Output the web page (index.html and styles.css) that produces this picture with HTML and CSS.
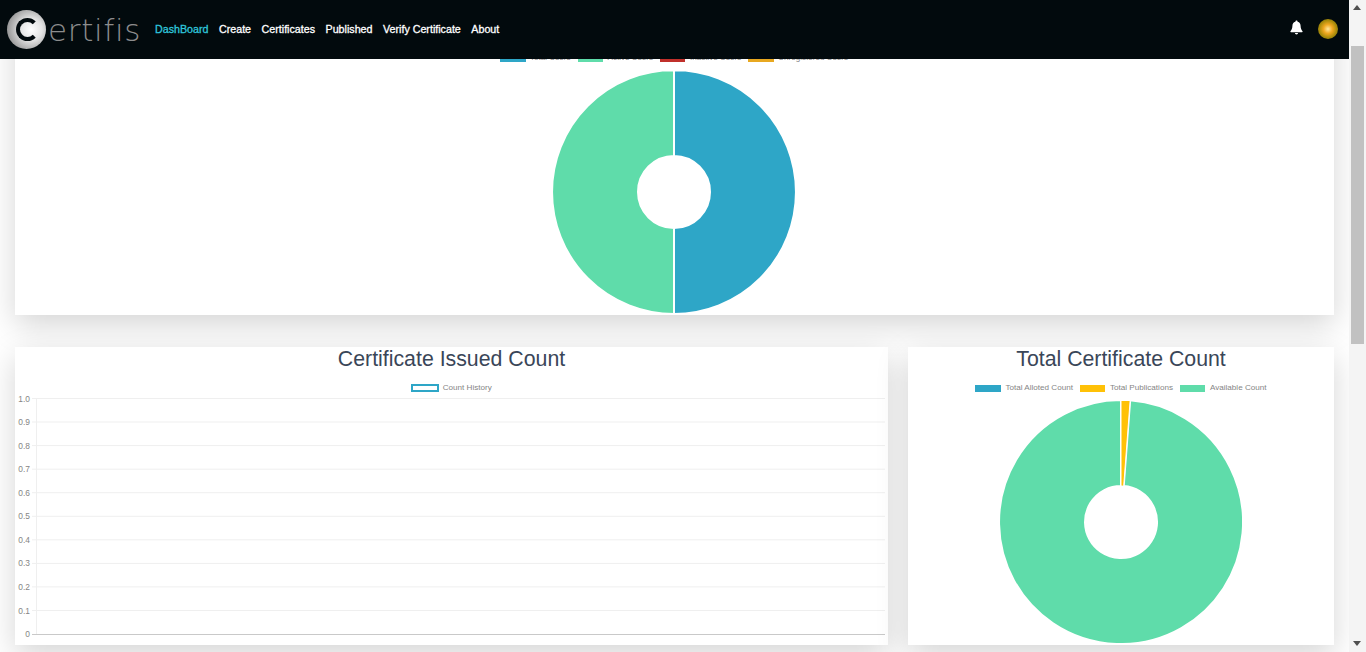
FILE: index.html
```html
<!DOCTYPE html>
<html lang="en">
<head>
<meta charset="UTF-8">
<meta name="viewport" content="width=device-width, initial-scale=1.0">
<link rel="stylesheet" href="styles.css">
<title>Certifis</title>
</head>
<body>
<div class="app">
  <header class="topbar">
    <div class="logo">
      <span class="logo-mark"></span>
      <span class="logo-text">ertifis</span>
    </div>
    <nav class="nav">
      <a class="nav-link active">DashBoard</a>
      <a class="nav-link">Create</a>
      <a class="nav-link">Certificates</a>
      <a class="nav-link">Published</a>
      <a class="nav-link">Verify Certificate</a>
      <a class="nav-link">About</a>
    </nav>
    <div class="topbar-right">
      <svg class="bell" viewBox="0 0 14 16" width="13" height="15">
        <path d="M7 0.5c-.7 0-1.2.5-1.2 1.2C3.6 2.3 2.6 4 2.6 6.2c0 3-1 4.6-2.1 5.8-.3.4-.1 1 .5 1h12c.6 0 .8-.6.5-1-1.100-1.200-2.100-2.800-2.100-5.800 0-2.200-1-3.900-3.200-4.500C8.200 1 7.700.5 7 .5z" fill="#fff"/>
        <path d="M5.300 14c0 .9.800 1.600 1.700 1.600s1.700-.7 1.700-1.600z" fill="#fff"/>
      </svg>
      <span class="avatar"></span>
    </div>
  </header>

  <main class="page">
    <section class="card card-wide">
      <div class="card-title"></div>
      <div class="legend">
        <span class="legend-item"><i class="swatch blue"></i>Total Users</span>
        <span class="legend-item"><i class="swatch green"></i>Active Users</span>
        <span class="legend-item"><i class="swatch red"></i>Inactive Users</span>
        <span class="legend-item"><i class="swatch orange"></i>Unregistered Users</span>
      </div>
      <svg class="pie" viewBox="-121 -121 242 242" width="242" height="242">
        <path d="M0 -122A122 122 0 0 1 0 122L0 36A36 36 0 0 0 0 -36Z" fill="#2ea6c7" stroke="#fff" stroke-width="2"/>
        <path d="M0 122A122 122 0 0 1 0 -122L0 -36A36 36 0 0 0 0 36Z" fill="#5fdcaa" stroke="#fff" stroke-width="2"/>
      </svg>
    </section>

    <div class="row">
      <section class="card">
        <h2 class="card-title">Certificate Issued Count</h2>
        <div class="legend legend-line">
          <span class="legend-item"><i class="swatch hollow"></i>Count History</span>
        </div>
        <svg class="line-chart" viewBox="0 0 873 244" width="873" height="244">
          <g class="grid">
            <path d="M17 1.500H870M17 25H870M17 48.600H870M17 72.200H870M17 95.700H870M17 119.300H870M17 142.800H870M17 166.400H870M17 189.900H870M17 213.500H870"/>
            <path d="M21.500 1V237"/>
          </g>
          <path class="axis" d="M17 237.500H870"/>
          <g class="ticks">
            <text x="15" y="4.500">1.0</text>
            <text x="15" y="28">0.9</text>
            <text x="15" y="51.600">0.8</text>
            <text x="15" y="75.200">0.7</text>
            <text x="15" y="98.700">0.6</text>
            <text x="15" y="122.300">0.5</text>
            <text x="15" y="145.800">0.4</text>
            <text x="15" y="169.400">0.3</text>
            <text x="15" y="192.900">0.2</text>
            <text x="15" y="216.500">0.1</text>
            <text x="15" y="240">0</text>
          </g>
        </svg>
      </section>
      <section class="card">
        <h2 class="card-title">Total Certificate Count</h2>
        <div class="legend">
          <span class="legend-item"><i class="swatch blue"></i>Total Alloted Count</span>
          <span class="legend-item"><i class="swatch yellow"></i>Total Publications</span>
          <span class="legend-item"><i class="swatch green"></i>Available Count</span>
        </div>
        <svg class="pie" viewBox="-121 -121 242 242" width="242" height="242">
          <path d="M9.150 -121.660A122 122 0 1 1 0 -122L0 -36A36 36 0 1 0 2.700 -35.900Z" fill="#5fdcaa" stroke="#fff" stroke-width="2"/>
          <path d="M0 -122A122 122 0 0 1 9.150 -121.660L2.700 -35.900A36 36 0 0 0 0 -36Z" fill="#ffc107" stroke="#fff" stroke-width="1"/>
        </svg>
      </section>
    </div>
  </main>
</div>

<div class="scrollbar">
  <span class="arrow arrow-up"></span>
  <div class="track"><div class="thumb"></div></div>
  <span class="arrow arrow-down"></span>
</div>
</body>
</html>
```

FILE: styles.css
```css
html, body {
  height: 100%;
  margin: 0;
  overflow: hidden;
}
body {
  display: flex;
  background-color: #fff;
  font-family: "Liberation Sans", Arial, sans-serif;
}
.app {
  position: relative;
  flex: 1;
  min-width: 0;
  overflow: hidden;
}

.topbar {
  position: absolute;
  top: 0;
  left: 0;
  right: 0;
  z-index: 2;
  display: flex;
  align-items: center;
  height: 59px;
  background-color: #020a0d;
}
.logo {
  display: flex;
  align-items: center;
  width: 155px;
  padding-left: 7px;
  box-sizing: border-box;
}
.logo-mark {
  position: relative;
  width: 39px;
  height: 39px;
  border-radius: 50%;
  background: radial-gradient(circle at 62% 50%, #fff 0, #e4e4e4 35%, #9a9a9a 75%, #777 100%);
  flex: none;
}
.logo-mark::after {
  content: "";
  position: absolute;
  left: 9px;
  top: 8px;
  width: 15px;
  height: 15px;
  border: 4px solid #020a0d;
  border-right-color: transparent;
  border-radius: 50%;
}
.logo-text {
  margin-left: 2px;
  font-family: "DejaVu Sans", sans-serif;
  font-weight: 200;
  font-size: 31px;
  line-height: 40px;
  letter-spacing: 0.7px;
  color: #8d8d8d;
}
.nav {
  display: flex;
  gap: 10.5px;
  margin-top: -1px;
}
.nav-link {
  font-size: 10.7px;
  -webkit-text-stroke: 0.3px #fff;
  color: #fff;
}
.nav-link.active {
  -webkit-text-stroke-color: #2fc6dc;
  color: #2fc6dc;
}
.topbar-right {
  display: flex;
  align-items: center;
  gap: 15px;
  margin: -1px 0 0 auto;
  padding-right: 11px;
}
.bell {
  display: block;
  margin-top: -4px;
}
.avatar {
  width: 20px;
  height: 20px;
  border-radius: 50%;
  background: radial-gradient(circle, #ffe9a0 0, #f0a820 32%, #a68a0a 62%, #7d6c08 100%);
}

.page {
  display: flex;
  flex-direction: column;
  gap: 32px;
  padding: 17px 15px 0;
}
.row {
  display: grid;
  grid-template-columns: 873px 1fr;
  gap: 20px;
}
.card {
  height: 298px;
  background-color: #fff;
  box-shadow: 0 10px 30px rgba(0, 0, 0, 0.17);
}
.card-wide {
  padding-right: 1px;
}
.card-title {
  height: 24px;
  margin: 0;
  font-size: 21.3px;
  font-weight: 400;
  line-height: 24px;
  text-align: center;
  color: #3a4658;
}
.legend {
  display: flex;
  justify-content: center;
  gap: 7px;
  height: 12px;
  margin: 11px 0 7px;
  font-size: 8.1px;
  line-height: 12px;
  color: #858585;
}
.legend-line {
  margin-bottom: 3px;
}
.legend-item {
  display: flex;
  align-items: center;
  gap: 4.5px;
}
.swatch {
  display: block;
  box-sizing: border-box;
  width: 25.5px;
  height: 7px;
}
.blue { background-color: #2ea6c7; }
.green { background-color: #5fdcaa; }
.red { background-color: #c0302b; }
.orange { background-color: #e8a820; }
.yellow { background-color: #ffc107; }
.hollow {
  width: 28px;
  height: 8px;
  border: 2px solid #2ea6c7;
  margin-right: -1px;
}
.pie {
  display: block;
  margin: 0 auto;
}
.line-chart {
  display: block;
  overflow: visible;
}
.grid path {
  fill: none;
  stroke: #efefef;
  stroke-width: 1;
}
.axis {
  fill: none;
  stroke: #c9c9c9;
  stroke-width: 1;
}
.ticks text {
  font-size: 8.4px;
  fill: #858585;
  text-anchor: end;
}

/* scrollbar drawn by hand, the page itself never scrolls */
.scrollbar {
  display: flex;
  flex-direction: column;
  flex: none;
  width: 17px;
  background-color: #f4f4f4;
}
.arrow {
  position: relative;
  display: block;
  height: 17px;
  flex: none;
}
.arrow::after {
  content: "";
  position: absolute;
  left: 4px;
  width: 0;
  height: 0;
  border-left: 4px solid transparent;
  border-right: 4px solid transparent;
}
.arrow-up::after {
  top: 5px;
  border-bottom: 5px solid #505050;
}
.arrow-down::after {
  top: 6px;
  border-top: 5px solid #505050;
}
.track {
  flex: 1;
  padding: 29px 2px 0;
}
.thumb {
  height: 298px;
  background-color: #c1c1c1;
}
```
